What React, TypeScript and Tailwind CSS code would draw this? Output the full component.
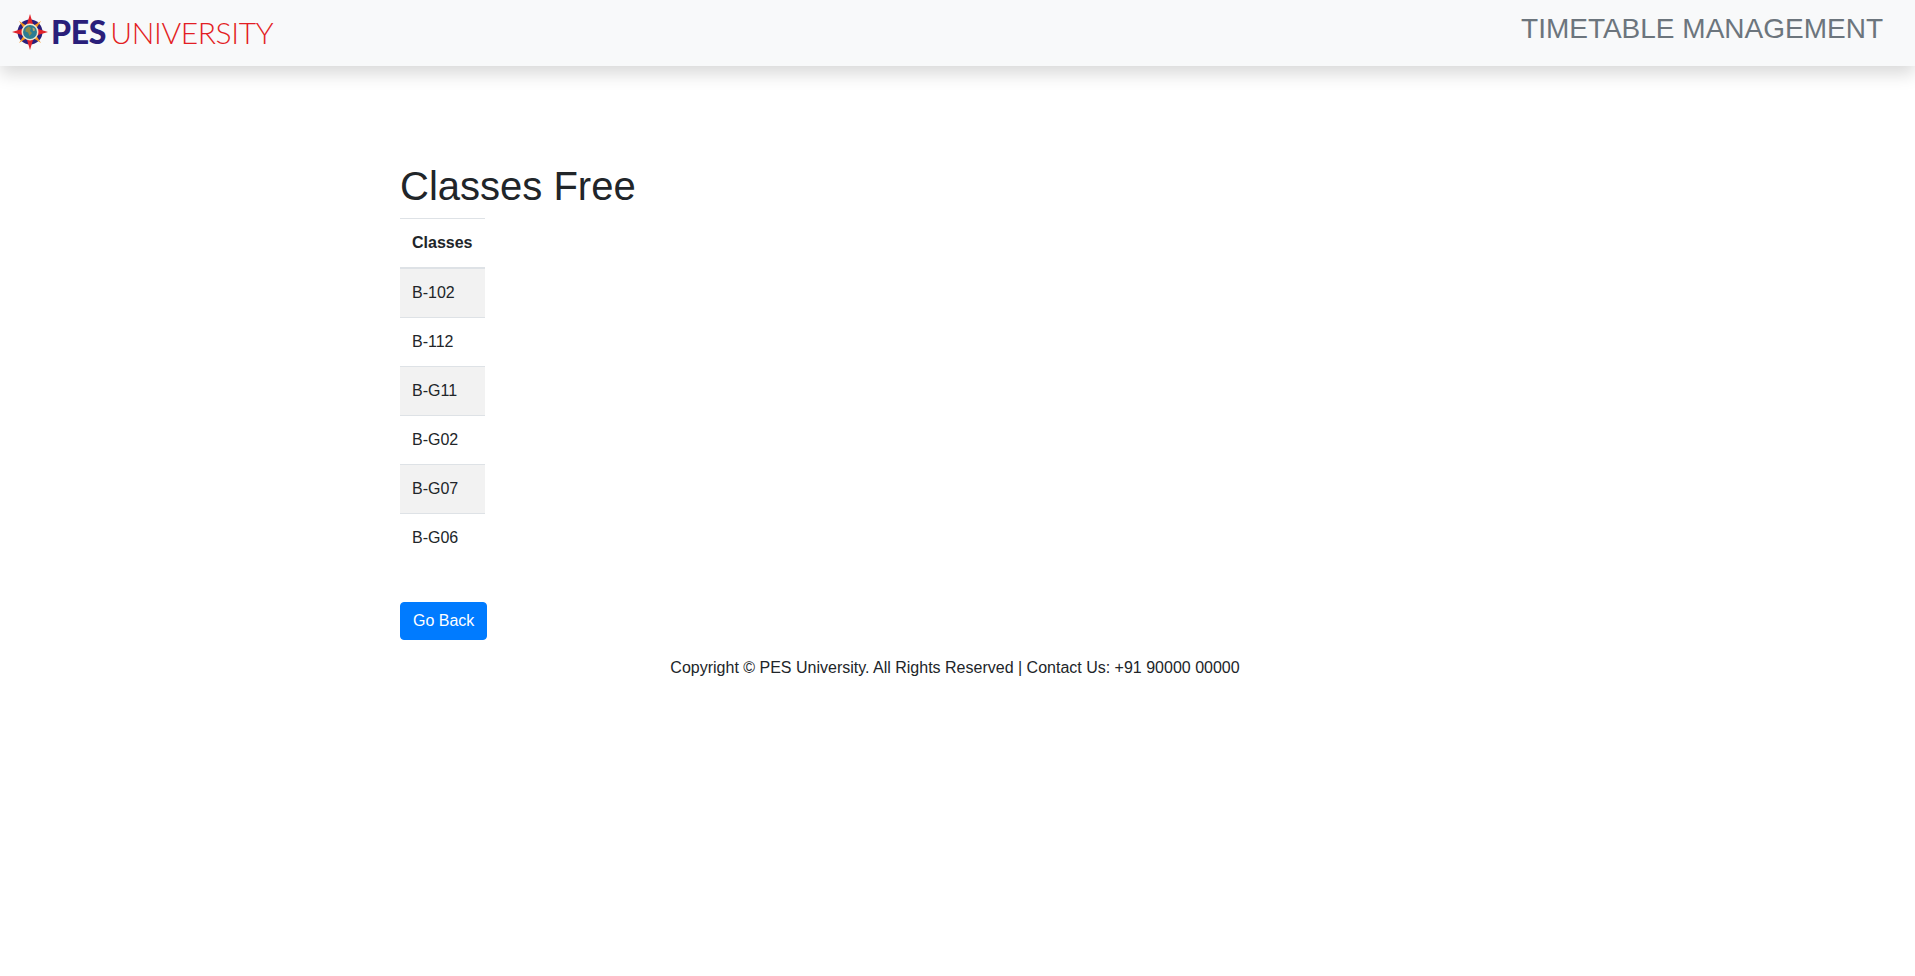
const rooms = ['B-102', 'B-112', 'B-G11', 'B-G02', 'B-G07', 'B-G06'];

function Compass() {
  return (
    <svg width="36" height="36" viewBox="0 0 36 36" className="shrink-0">
      <circle cx="18" cy="18" r="12.5" fill="#2a1f7a" />
      {/* diagonal orange points */}
      <g fill="#f7941d">
        <polygon points="7,7 14,11.5 11.5,14" />
        <polygon points="29,7 24.5,14 22,11.5" />
        <polygon points="7,29 11.5,22 14,24.5" />
        <polygon points="29,29 22,24.5 24.5,22" />
      </g>
      {/* red main points */}
      <g fill="#e0232b">
        <polygon points="18,0 21,10 15,10" />
        <polygon points="18,36 15,26 21,26" />
        <polygon points="0,18 10,15 10,21" />
        <polygon points="36,18 26,21 26,15" />
      </g>
      <circle cx="18" cy="18" r="8.5" fill="#efe9cf" />
      <circle cx="18" cy="18" r="7" fill="#2c7d92" />
      <path d="M13.5 15l3-2.5 2.5 1.5-1 3 2 2-2.5 3-1.5-3.5-2.5-1z" fill="#8d8a4a" />
      <path d="M20.5 13.5l2 1 .5 2-2 .5z" fill="#b9a86a" />
    </svg>
  );
}

export default function App() {
  return (
    <div className="min-h-[976px] bg-white text-[#212529] font-['Liberation_Sans',Arial,sans-serif] text-base">
      <nav className="h-[66px] bg-[#f8f9fa] shadow-[0_8px_16px_rgba(0,0,0,0.15)] flex justify-between pl-[12px] pr-[32px]">
        <div className="flex items-center gap-[3px] pb-[2px] font-['Lato',sans-serif] leading-none">
          <Compass />
          <span className="text-[32px] font-black text-[#2a1f7a] tracking-[-0.3px] mb-[1px]">PES</span>
          <span className="text-[30px] font-light text-[#e31e24] ml-[1px] tracking-[-0.35px] mb-[1px]">UNIVERSITY</span>
        </div>
        <h3 className="text-[28px] leading-[1.2] text-[#6c757d] pt-[12px]">TIMETABLE MANAGEMENT</h3>
      </nav>

      <main className="w-[1115px] mx-auto pt-[96px]">
        <h1 className="text-[40px] leading-[1.2] mb-2">Classes Free</h1>
        <table className="border-collapse">
          <thead>
            <tr>
              <th className="p-3 text-left font-bold leading-6 border-t border-b-2 border-[#dee2e6]">Classes</th>
            </tr>
          </thead>
          <tbody>
            {rooms.map((room, i) => (
              <tr key={room} className={i % 2 === 0 ? 'bg-[#f2f2f2]' : ''}>
                <td className="p-3 leading-6 border-t border-[#dee2e6]">{room}</td>
              </tr>
            ))}
          </tbody>
        </table>
        <button className="mt-10 block bg-[#007bff] text-white rounded px-3 py-[6px] leading-6 border border-[#007bff]">Go Back</button>
        <p className="text-center w-[1110px] mt-4 leading-6">Copyright © PES University. All Rights Reserved | Contact Us: +91 90000 00000</p>
      </main>
    </div>
  );
}
